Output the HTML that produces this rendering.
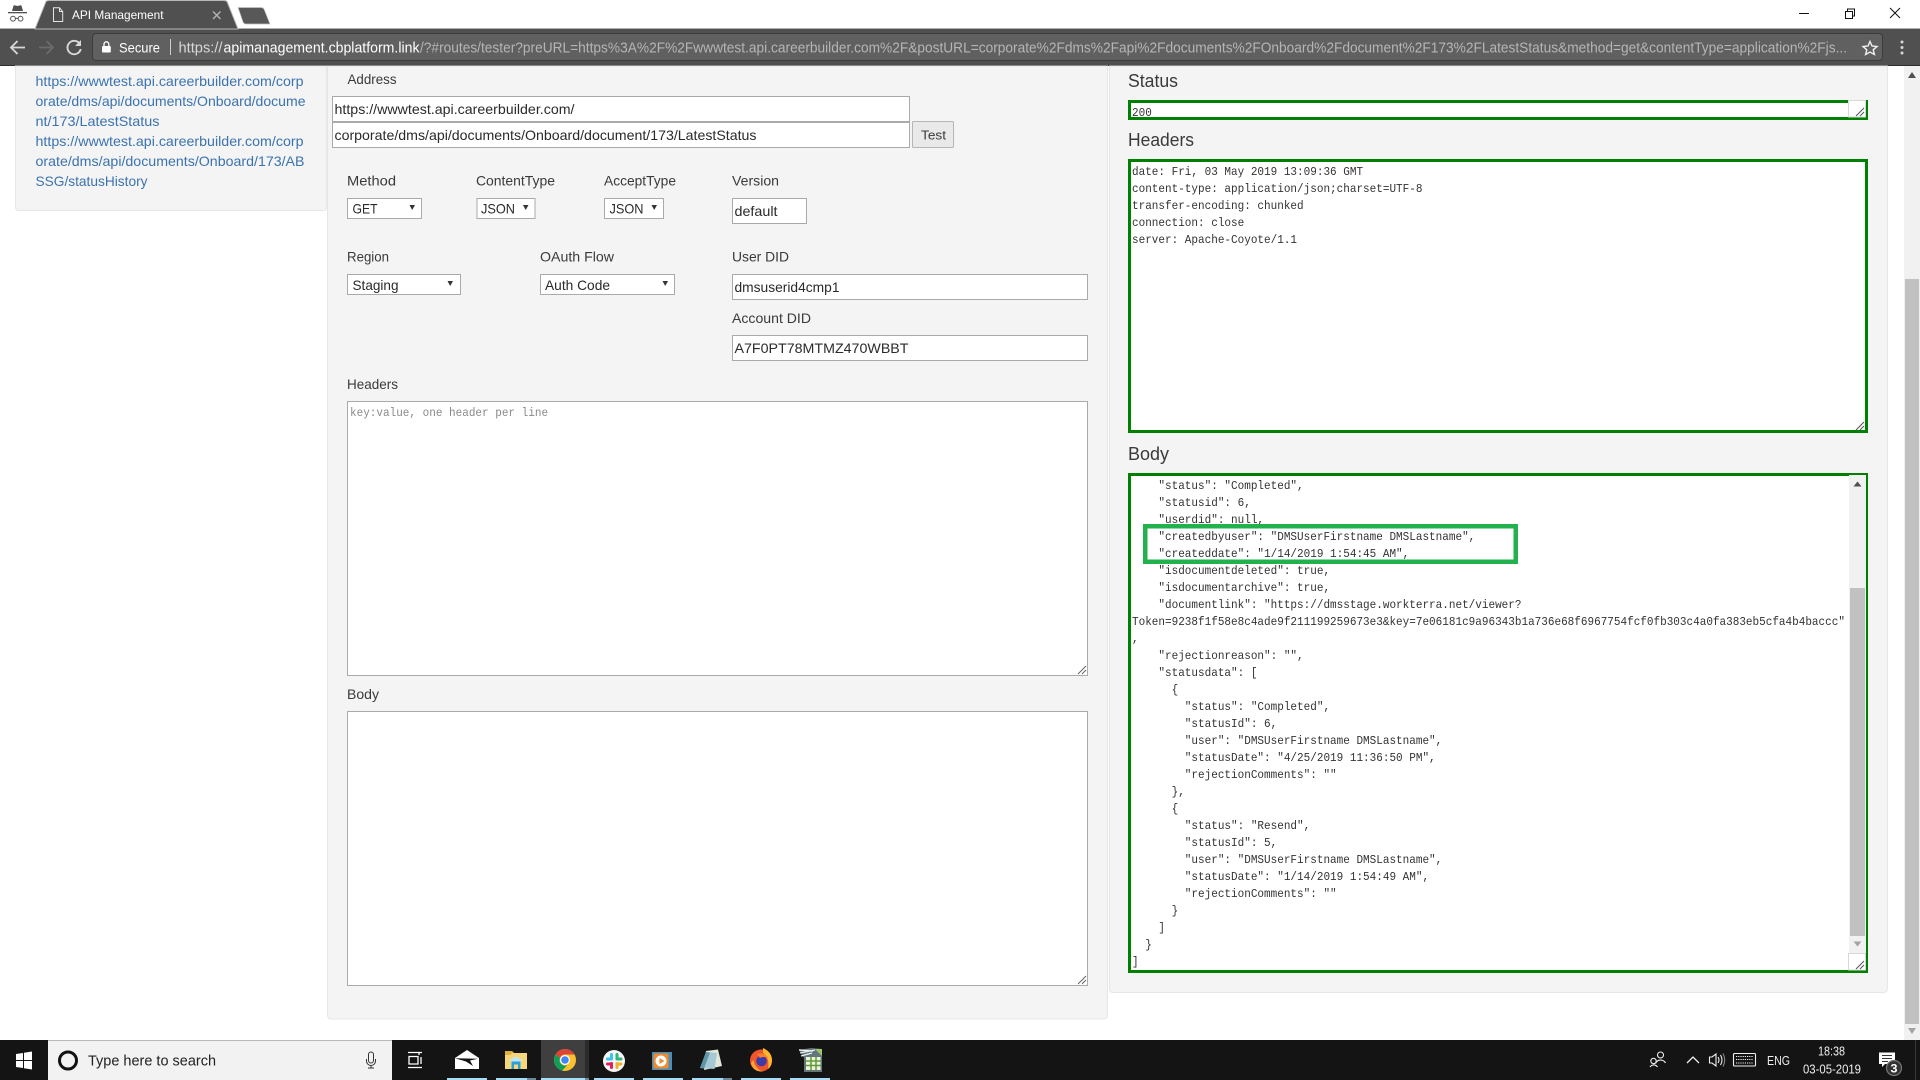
<!DOCTYPE html>
<html><head><meta charset="utf-8"><title>API Management</title>
<style>
html,body{margin:0;padding:0;width:1920px;height:1080px;overflow:hidden;background:#fff}
svg{position:absolute;left:0;top:0}
text{font-family:"Liberation Sans",sans-serif;font-size:14px;fill:#3a3a3a}
.lk{fill:#3b73b0;font-size:14px}
.i{fill:#2a2a2a}
.m{position:absolute;margin:0;font:12px/17px "Liberation Mono",monospace;color:#333;transform:scaleX(.9167);transform-origin:0 0;white-space:pre;overflow:hidden}
</style></head><body>
<svg width="1920" height="1080" viewBox="0 0 1920 1080" xmlns="http://www.w3.org/2000/svg">
<!-- browser chrome -->
<rect width="1920" height="29" fill="#fff"/>
<rect y="28" width="1920" height="38" fill="#505050"/>
<rect y="28" width="1920" height="1" fill="#b0b0b0"/>
<rect y="65" width="1920" height="1" fill="#2e2e2e"/>
<path d="M35 29 L46 1.5 Q47 .5 49 .5 H224 Q226 .5 227 1.5 L238 29 Z" fill="#505050" stroke="#b8b8b8"/>
<path d="M238 7.5 H261 Q263 7.5 264 9 L270 24 H246 Q244 24 243 22 Z" fill="#585858" stroke="#c4c4c4" stroke-width=".7"/>
<!-- incognito -->
<path d="M12 11 L13.5 5.8 Q14 5 15 5.4 L17.5 6 L20 5.4 Q21 5 21.5 5.8 L23 11 Z" fill="#505050"/>
<rect x="8" y="12" width="19" height="1.3" fill="#505050"/>
<circle cx="13" cy="18.7" r="2.4" fill="none" stroke="#505050"/><circle cx="20.5" cy="18.7" r="2.4" fill="none" stroke="#505050"/><path d="M15.4 18.3 H18.1" stroke="#505050"/>
<!-- doc -->
<path d="M53.5 7.8 H59.5 L62.7 11.5 V21.5 H53.5 Z M59.5 7.8 V11.5 H62.7" fill="none" stroke="#e4e4e4"/>
<text x="72" y="19" style="font-size:12px;fill:#fff" textLength="91.5" lengthAdjust="spacingAndGlyphs">API Management</text>
<path d="M213 11.5 L220.5 19 M220.5 11.5 L213 19" stroke="#b4b4b4" stroke-width="1.4"/>
<!-- nav -->
<path d="M25 47.5 H12 M17.5 41 L11 47.5 L17.5 54" fill="none" stroke="#d8d8d8" stroke-width="1.8"/>
<path d="M39 47.5 H52 M46.5 41 L53 47.5 L46.5 54" fill="none" stroke="#6c6c6c" stroke-width="1.8"/>
<path d="M79.5 43.5 A6.7 6.7 0 1 0 80.7 49" fill="none" stroke="#d8d8d8" stroke-width="1.9"/><path d="M81 40 V46 H75 Z" fill="#d8d8d8"/>
<!-- omnibox -->
<rect x="92.5" y="33.5" width="1790" height="27" rx="3.5" fill="#606060" stroke="#3c3c3c"/>
<rect x="102" y="46" width="8.8" height="6.5" rx="1" fill="#fff"/><path d="M104 46 V44.2 A2.4 2.4 0 0 1 108.8 44.2 V46" fill="none" stroke="#fff" stroke-width="1.3"/>
<text x="119" y="52.5" style="font-size:14px;fill:#fff" textLength="41" lengthAdjust="spacingAndGlyphs">Secure</text>
<rect x="170" y="39" width="1" height="16" fill="#cfcfcf"/>
<text x="178.5" y="52.5" style="font-size:14.5px;fill:#d8d8d8" textLength="44" lengthAdjust="spacingAndGlyphs">https://</text>
<text x="223.5" y="52.5" style="font-size:14.5px;fill:#fff" textLength="196" lengthAdjust="spacingAndGlyphs">apimanagement.cbplatform.link</text>
<text x="420" y="52.5" style="font-size:14.5px;fill:#b5b5b5" textLength="1427" lengthAdjust="spacingAndGlyphs">/?#routes/tester?preURL=https%3A%2F%2Fwwwtest.api.careerbuilder.com%2F&amp;postURL=corporate%2Fdms%2Fapi%2Fdocuments%2FOnboard%2Fdocument%2F173%2FLatestStatus&amp;method=get&amp;contentType=application%2Fjs...</text>
<path d="M1870 41.5 L1872 46 L1877 46.5 L1873.2 49.8 L1874.4 54.5 L1870 52 L1865.6 54.5 L1866.8 49.8 L1863 46.5 L1868 46 Z" fill="none" stroke="#f0f0f0" stroke-width="1.4"/>
<circle cx="1902" cy="42" r="1.5" fill="#d8d8d8"/><circle cx="1902" cy="47.5" r="1.5" fill="#d8d8d8"/><circle cx="1902" cy="53" r="1.5" fill="#d8d8d8"/>
<!-- window controls -->
<rect x="1799" y="13" width="10" height="1" fill="#111"/>
<path d="M1845.5 11.5 H1852.5 V18.5 H1845.5 Z M1847.5 11.5 V9 H1854.5 V16 H1852.5" fill="none" stroke="#111"/>
<path d="M1890 8 L1900 18 M1900 8 L1890 18" stroke="#111" stroke-width="1"/>

<!-- panels -->
<path d="M15.5 66 H326.5 V207 Q326.5 210.5 323 210.5 H19 Q15.5 210.5 15.5 207 Z" fill="#f4f4f4" stroke="#e6e6e6"/>
<path d="M327.5 66 H1107.5 V1015 Q1107.5 1019 1103.5 1019 H331.5 Q327.5 1019 327.5 1015 Z" fill="#f4f4f4" stroke="#e6e6e6"/>
<path d="M1109.5 66 H1887.5 V988 Q1887.5 992.5 1883 992.5 H1113.5 Q1109.5 992.5 1109.5 988 Z" fill="#f4f4f4" stroke="#e6e6e6"/>
<!-- page scrollbar -->
<rect x="1904" y="66" width="16" height="974" fill="#f1f1f1"/>
<rect x="1905" y="279" width="14" height="745" fill="#c1c1c1"/>
<path d="M1912 72 L1916 78 H1908 Z" fill="#505050"/>
<path d="M1908 1028 H1916 L1912 1034 Z" fill="#a3a3a3"/>

<!-- sidebar links -->
<text class="lk" x="35.5" y="86" textLength="268" lengthAdjust="spacingAndGlyphs">https://wwwtest.api.careerbuilder.com/corp</text>
<text class="lk" x="35.5" y="106" textLength="270" lengthAdjust="spacingAndGlyphs">orate/dms/api/documents/Onboard/docume</text>
<text class="lk" x="35.5" y="126" textLength="124" lengthAdjust="spacingAndGlyphs">nt/173/LatestStatus</text>
<text class="lk" x="35.5" y="146" textLength="268" lengthAdjust="spacingAndGlyphs">https://wwwtest.api.careerbuilder.com/corp</text>
<text class="lk" x="35.5" y="166" textLength="269" lengthAdjust="spacingAndGlyphs">orate/dms/api/documents/Onboard/173/AB</text>
<text class="lk" x="35.5" y="186" textLength="112" lengthAdjust="spacingAndGlyphs">SSG/statusHistory</text>

<!-- form labels -->
<text x="347.5" y="84" textLength="49" lengthAdjust="spacingAndGlyphs">Address</text>
<text x="347" y="185.5" textLength="49" lengthAdjust="spacingAndGlyphs">Method</text>
<text x="476" y="185.5" textLength="79" lengthAdjust="spacingAndGlyphs">ContentType</text>
<text x="604" y="185.5" textLength="72" lengthAdjust="spacingAndGlyphs">AcceptType</text>
<text x="732" y="185.5" textLength="47" lengthAdjust="spacingAndGlyphs">Version</text>
<text x="347" y="261.5" textLength="42" lengthAdjust="spacingAndGlyphs">Region</text>
<text x="540" y="261.5" textLength="74" lengthAdjust="spacingAndGlyphs">OAuth Flow</text>
<text x="732" y="261.5" textLength="57" lengthAdjust="spacingAndGlyphs">User DID</text>
<text x="732" y="323" textLength="79" lengthAdjust="spacingAndGlyphs">Account DID</text>
<text x="347" y="389" textLength="51" lengthAdjust="spacingAndGlyphs">Headers</text>
<text x="347" y="699" textLength="32" lengthAdjust="spacingAndGlyphs">Body</text>

<!-- address inputs -->
<rect x="332.5" y="96.5" width="577" height="25" fill="#fff" stroke="#aaa"/>
<rect x="332.5" y="122.5" width="577" height="25" fill="#fff" stroke="#aaa"/>
<text class="i" x="334.5" y="114" textLength="240" lengthAdjust="spacingAndGlyphs">https://wwwtest.api.careerbuilder.com/</text>
<text class="i" x="334.5" y="140" textLength="422" lengthAdjust="spacingAndGlyphs">corporate/dms/api/documents/Onboard/document/173/LatestStatus</text>
<rect x="912.5" y="121.5" width="41" height="26" rx="1" fill="#e9e9e9" stroke="#b5b5b5"/>
<text x="921" y="139.5" style="font-size:13px" textLength="25" lengthAdjust="spacingAndGlyphs">Test</text>

<!-- selects -->
<g fill="#fff" stroke="#aaa">
<rect x="347.5" y="198.5" width="74" height="20"/>
<rect x="477" y="198.5" width="58" height="20"/>
<rect x="604.5" y="198.5" width="59" height="20"/>
<rect x="347.5" y="274.5" width="113" height="20"/>
<rect x="540.5" y="274.5" width="134" height="20"/>
<rect x="732.5" y="198.5" width="74" height="25"/>
<rect x="732.5" y="274.5" width="355" height="25"/>
<rect x="732.5" y="335.5" width="355" height="25"/>
<rect x="347.5" y="401.5" width="740" height="274"/>
<rect x="347.5" y="711.5" width="740" height="274"/>
</g>
<text class="i" x="352.5" y="213.5" textLength="25" lengthAdjust="spacingAndGlyphs">GET</text>
<text class="i" x="481" y="213.5" textLength="34" lengthAdjust="spacingAndGlyphs">JSON</text>
<text class="i" x="609.5" y="213.5" textLength="34" lengthAdjust="spacingAndGlyphs">JSON</text>
<text class="i" x="352.5" y="290" textLength="46" lengthAdjust="spacingAndGlyphs">Staging</text>
<text class="i" x="545" y="290" textLength="65" lengthAdjust="spacingAndGlyphs">Auth Code</text>
<g fill="#333">
<path d="M409.5 205 H415 L412.2 210 Z"/><path d="M523 205 H528.5 L525.7 210 Z"/><path d="M651.5 205 H657 L654.2 210 Z"/>
<path d="M447.5 281 H453 L450.2 286 Z"/><path d="M662.5 281 H668 L665.2 286 Z"/>
</g>
<text class="i" x="734.5" y="216" textLength="43" lengthAdjust="spacingAndGlyphs">default</text>
<text class="i" x="734.5" y="292" textLength="105" lengthAdjust="spacingAndGlyphs">dmsuserid4cmp1</text>
<text class="i" x="734.5" y="353" textLength="174" lengthAdjust="spacingAndGlyphs">A7F0PT78MTMZ470WBBT</text>
<!-- textarea grips -->
<path d="M1078 674 L1086 666 M1082 674 L1086 670" stroke="#666"/>
<path d="M1078 984 L1086 976 M1082 984 L1086 980" stroke="#666"/>

<!-- right headings -->
<text x="1128" y="87" style="font-size:18px" textLength="50" lengthAdjust="spacingAndGlyphs">Status</text>
<text x="1128" y="146" style="font-size:18px" textLength="66" lengthAdjust="spacingAndGlyphs">Headers</text>
<text x="1128" y="460" style="font-size:18px" textLength="41" lengthAdjust="spacingAndGlyphs">Body</text>

<!-- output boxes -->
<rect x="1129.5" y="101.5" width="737" height="17" fill="#fff"/>
<rect x="1129.5" y="160.5" width="737" height="271" fill="#fff"/>
<rect x="1129.5" y="474.5" width="737" height="497" fill="#fff"/>

<!-- taskbar -->
<rect y="1040" width="1920" height="40" fill="#141414"/>
<rect x="48" y="1040" width="344" height="40" fill="#f2f2f2"/>
<rect x="48" y="1040" width="344" height="1" fill="#b8b8b8"/>
<g fill="#fff"><path d="M16 1054 L23 1053 V1060 H16 Z"/><path d="M24 1052.8 L32 1051.5 V1060 H24 Z"/><path d="M16 1061 H23 V1068 L16 1067 Z"/><path d="M24 1061 H32 V1069.5 L24 1068.2 Z"/></g>
<circle cx="68" cy="1060.5" r="8.5" fill="none" stroke="#111" stroke-width="3"/>
<text x="88" y="1065.5" style="font-size:15px;fill:#222" textLength="128" lengthAdjust="spacingAndGlyphs">Type here to search</text>
<rect x="368.5" y="1052" width="5" height="11" rx="2.5" fill="none" stroke="#333"/><path d="M366.5 1059 V1061 A4.5 4.5 0 0 0 375.5 1061 V1059 M371 1065.5 V1068 M368 1068 H374" fill="none" stroke="#333"/>
<path d="M408 1052.5 H422 M408 1067.5 H422 M419 1052.5 V1055 M409 1056.5 H418 V1064 H409 Z M421 1057 V1064" fill="none" stroke="#fff" stroke-width="1.3"/>
<!-- mail -->
<path d="M455 1058 L467 1050 L479 1058 V1069 H455 Z" fill="#fff"/>
<path d="M455 1058.3 L478 1058.7 L470 1060.5 L473 1066 L466 1061.5 Z" fill="#141414"/>
<path d="M455 1059.5 L464 1061 L455 1067 Z" fill="#fff"/>
<!-- explorer -->
<path d="M505 1051 H512 L514 1053 H527 V1069 H505 Z" fill="#f5d67a"/>
<path d="M505 1051 H512 L514 1053 H512 L510.5 1055 H505 Z" fill="#e0b040"/>
<path d="M510 1060 L516 1056.5 L522 1060 V1061.5 H510 Z" fill="#bfe6f7"/>
<path d="M511.5 1061.5 H520.5 V1069 H518 V1064.5 H514 V1069 H511.5 Z" fill="#2a9fe0"/>
<!-- chrome -->
<rect x="541" y="1040" width="44" height="40" fill="#3f3f3f"/><rect x="585" y="1040" width="4" height="40" fill="#2c2c2c"/>
<circle cx="565" cy="1060" r="11" fill="#fbc02d"/>
<path d="M565 1049 A11 11 0 0 1 574.5 1054.5 H565 A5.5 5.5 0 0 0 560 1058 L555.5 1054.5 A11 11 0 0 1 565 1049 Z" fill="#db4437"/>
<path d="M555.5 1054.5 A11 11 0 0 0 562 1070.6 L567.5 1065 A5.5 5.5 0 0 1 560 1058 Z" fill="#0f9d58"/>
<circle cx="565" cy="1060" r="5" fill="#fff"/><circle cx="565" cy="1060" r="3.8" fill="#4285f4"/>
<!-- slack -->
<circle cx="614" cy="1061" r="11" fill="#f6f6f6"/>
<rect x="610" y="1053" width="3" height="7" rx="1.5" fill="#36c5f0"/><rect x="615.5" y="1053" width="3" height="7" rx="1.5" fill="#2eb67d"/><rect x="610" y="1062" width="3" height="7" rx="1.5" fill="#e01e5a"/><rect x="615.5" y="1062" width="3" height="7" rx="1.5" fill="#ecb22e"/>
<rect x="606" y="1057.5" width="7" height="3" rx="1.5" fill="#36c5f0"/><rect x="615.5" y="1057.5" width="7" height="3" rx="1.5" fill="#2eb67d"/><rect x="606" y="1062.5" width="7" height="3" rx="1.5" fill="#e01e5a"/><rect x="615.5" y="1062.5" width="7" height="3" rx="1.5" fill="#ecb22e"/>
<!-- media -->
<rect x="652" y="1052" width="20" height="18" fill="#4f8fb5"/><rect x="653.5" y="1053.5" width="15" height="15" rx="2" fill="#ef8a2e"/><circle cx="661" cy="1061" r="5.5" fill="#fff"/><path d="M659.5 1058 L664.5 1061 L659.5 1064 Z" fill="#ef8a2e"/>
<!-- notepad -->
<path d="M706 1051 L718 1049.5 L722 1066 L704 1070 Z" fill="#dfe8d8"/>
<path d="M706 1052 L717 1053 L714.5 1069 L700 1068 Z" fill="#a5c8d4"/>
<path d="M706 1052 L710 1052.5 L704 1068.5 L700 1068 Z" fill="#5d96a6"/>
<!-- firefox -->
<circle cx="761" cy="1060.5" r="11" fill="#f0562a"/>
<path d="M763 1048 Q772 1052 772 1060.5 Q772 1066 768 1069 Q770 1058 763 1053 Z" fill="#ffb52e"/>
<path d="M751 1063 Q753 1072 763 1071.5 Q755 1069 753.5 1060 Z" fill="#ffa436"/>
<circle cx="761.5" cy="1061" r="5.3" fill="#3d3ba8"/>
<path d="M757 1054 Q765 1052 768 1058 Q763 1056 760 1058 Z" fill="#f7812c"/>
<!-- archive -->
<path d="M799 1050 L811 1048 L822 1049 V1072 H804 V1058 Z" fill="#65767a"/>
<path d="M799 1050 L813 1051 M800 1053 L815 1050 M801 1056 L812 1053" stroke="#e8eef0" stroke-width="1.4"/>
<path d="M815 1049 L822 1049 V1056 Z" fill="#9dc56a"/>
<rect x="806" y="1057" width="14.5" height="13" fill="#eef3d8"/><path d="M806 1061 H820.5 M806 1065.5 H820.5 M811 1057 V1070 M816 1057 V1070" stroke="#5e9a3a" stroke-width="1.5"/>
<!-- running underlines -->
<g fill="#a6dcf6"><rect x="447" y="1078" width="40" height="2"/><rect x="496" y="1078" width="31" height="2"/><rect x="541" y="1078" width="44" height="2"/><rect x="594" y="1078" width="40" height="2"/><rect x="643" y="1078" width="40" height="2"/><rect x="692" y="1078" width="31" height="2"/><rect x="741" y="1078" width="40" height="2"/><rect x="790" y="1078" width="40" height="2"/></g>
<g fill="#6a8a9c"><rect x="527" y="1078" width="9" height="2"/><rect x="585" y="1078" width="4" height="2"/><rect x="723" y="1078" width="9" height="2"/></g>
<!-- tray -->
<g fill="none" stroke="#f0f0f0" stroke-width="1.1">
<circle cx="1660.5" cy="1055" r="3"/><path d="M1655.5 1063.5 A5.5 5.5 0 0 1 1665.5 1063"/>
<circle cx="1653.5" cy="1061" r="2.7"/><path d="M1650 1067 A4.5 4.5 0 0 1 1657.5 1067"/>
<path d="M1687 1063 L1693 1057 L1699 1063" stroke-width="1.3"/>
<path d="M1709.5 1057 H1712 L1716 1054 V1066 L1712 1063 H1709.5 Z"/><path d="M1718 1057 Q1720 1060 1718 1063 M1720.5 1055 Q1723.5 1060 1720.5 1065"/>
<path d="M1723 1053.5 Q1726.5 1060 1723 1066.5" stroke="#888"/>
<rect x="1733.5" y="1053.5" width="22" height="12.5" rx="1"/>
</g>
<path d="M1736 1056.5 H1753 M1736 1059.5 H1753 M1736 1063 H1753" stroke="#f0f0f0" stroke-dasharray="1.2 1"/>
<text x="1767" y="1065" style="font-size:12.5px;fill:#eee" textLength="23" lengthAdjust="spacingAndGlyphs">ENG</text>
<text x="1818" y="1055.5" style="font-size:12.5px;fill:#eee" textLength="27" lengthAdjust="spacingAndGlyphs">18:38</text>
<text x="1803" y="1073.5" style="font-size:12.5px;fill:#eee" textLength="58" lengthAdjust="spacingAndGlyphs">03-05-2019</text>
<path d="M1879 1052.5 H1895 V1064 H1885 L1882 1067 V1064 H1879 Z" fill="#fff"/>
<path d="M1882 1055.5 H1892 M1882 1058.5 H1892 M1882 1061.5 H1888" stroke="#333"/>
<circle cx="1894" cy="1068" r="7.5" fill="#333" stroke="#777" stroke-width="1.2"/>
<text x="1890.5" y="1072.5" style="font-size:12px;font-weight:bold;fill:#fff" textLength="7" lengthAdjust="spacingAndGlyphs">3</text>
<rect x="1915" y="1040" width="1" height="40" fill="#3a3a3a"/>
</svg>

<pre class="m" style="left:350px;top:404.5px;color:#8a8a8a">key:value, one header per line</pre>
<pre class="m" style="left:1132px;top:105px;height:12px">200</pre>
<pre class="m" style="left:1132px;top:164px">date: Fri, 03 May 2019 13:09:36 GMT
content-type: application/json;charset=UTF-8
transfer-encoding: chunked
connection: close
server: Apache-Coyote/1.1</pre>
<pre class="m" style="left:1132px;top:477.5px">    "status": "Completed",
    "statusid": 6,
    "userdid": null,
    "createdbyuser": "DMSUserFirstname DMSLastname",
    "createddate": "1/14/2019 1:54:45 AM",
    "isdocumentdeleted": true,
    "isdocumentarchive": true,
    "documentlink": "https://dmsstage.workterra.net/viewer?
Token=9238f1f58e8c4ade9f211199259673e3&amp;key=7e06181c9a96343b1a736e68f6967754fcf0fb303c4a0fa383eb5cfa4b4baccc"
,
    "rejectionreason": "",
    "statusdata": [
      {
        "status": "Completed",
        "statusId": 6,
        "user": "DMSUserFirstname DMSLastname",
        "statusDate": "4/25/2019 11:36:50 PM",
        "rejectionComments": ""
      },
      {
        "status": "Resend",
        "statusId": 5,
        "user": "DMSUserFirstname DMSLastname",
        "statusDate": "1/14/2019 1:54:49 AM",
        "rejectionComments": ""
      }
    ]
  }
]</pre>
<!-- green borders and controls above text -->
<svg width="1920" height="1080" viewBox="0 0 1920 1080" xmlns="http://www.w3.org/2000/svg" style="pointer-events:none">
<g fill="none" stroke="#008000" stroke-width="3">
<rect x="1129.5" y="101.5" width="737" height="17"/>
<rect x="1129.5" y="160.5" width="737" height="271"/>
<rect x="1129.5" y="474.5" width="737" height="497"/>
</g>
<rect x="1145.25" y="526.25" width="370.5" height="35.5" fill="none" stroke="#22b14c" stroke-width="4.5"/>
<!-- body scrollbar -->
<rect x="1849" y="475" width="17" height="478" fill="#f1f1f1"/>
<rect x="1850" y="588" width="15" height="348" fill="#c1c1c1"/>
<path d="M1857.5 481.5 L1861.5 486.5 H1853.5 Z" fill="#505050"/>
<path d="M1853.5 941.5 H1861.5 L1857.5 946.5 Z" fill="#a3a3a3"/>
<!-- grips -->
<g fill="#fff" stroke="#d8d8d8">
<rect x="1848.5" y="953.5" width="17" height="16.5"/>
<rect x="1848.5" y="100.5" width="17" height="16.5"/>
</g>
<g stroke="#555">
<path d="M1856 969 L1864 961 M1860 969 L1864 965"/>
<path d="M1856 116 L1864 108 M1860 116 L1864 112"/>
<path d="M1856 430 L1864 422 M1860 430 L1864 426"/>
</g>
</svg>
</body></html>
